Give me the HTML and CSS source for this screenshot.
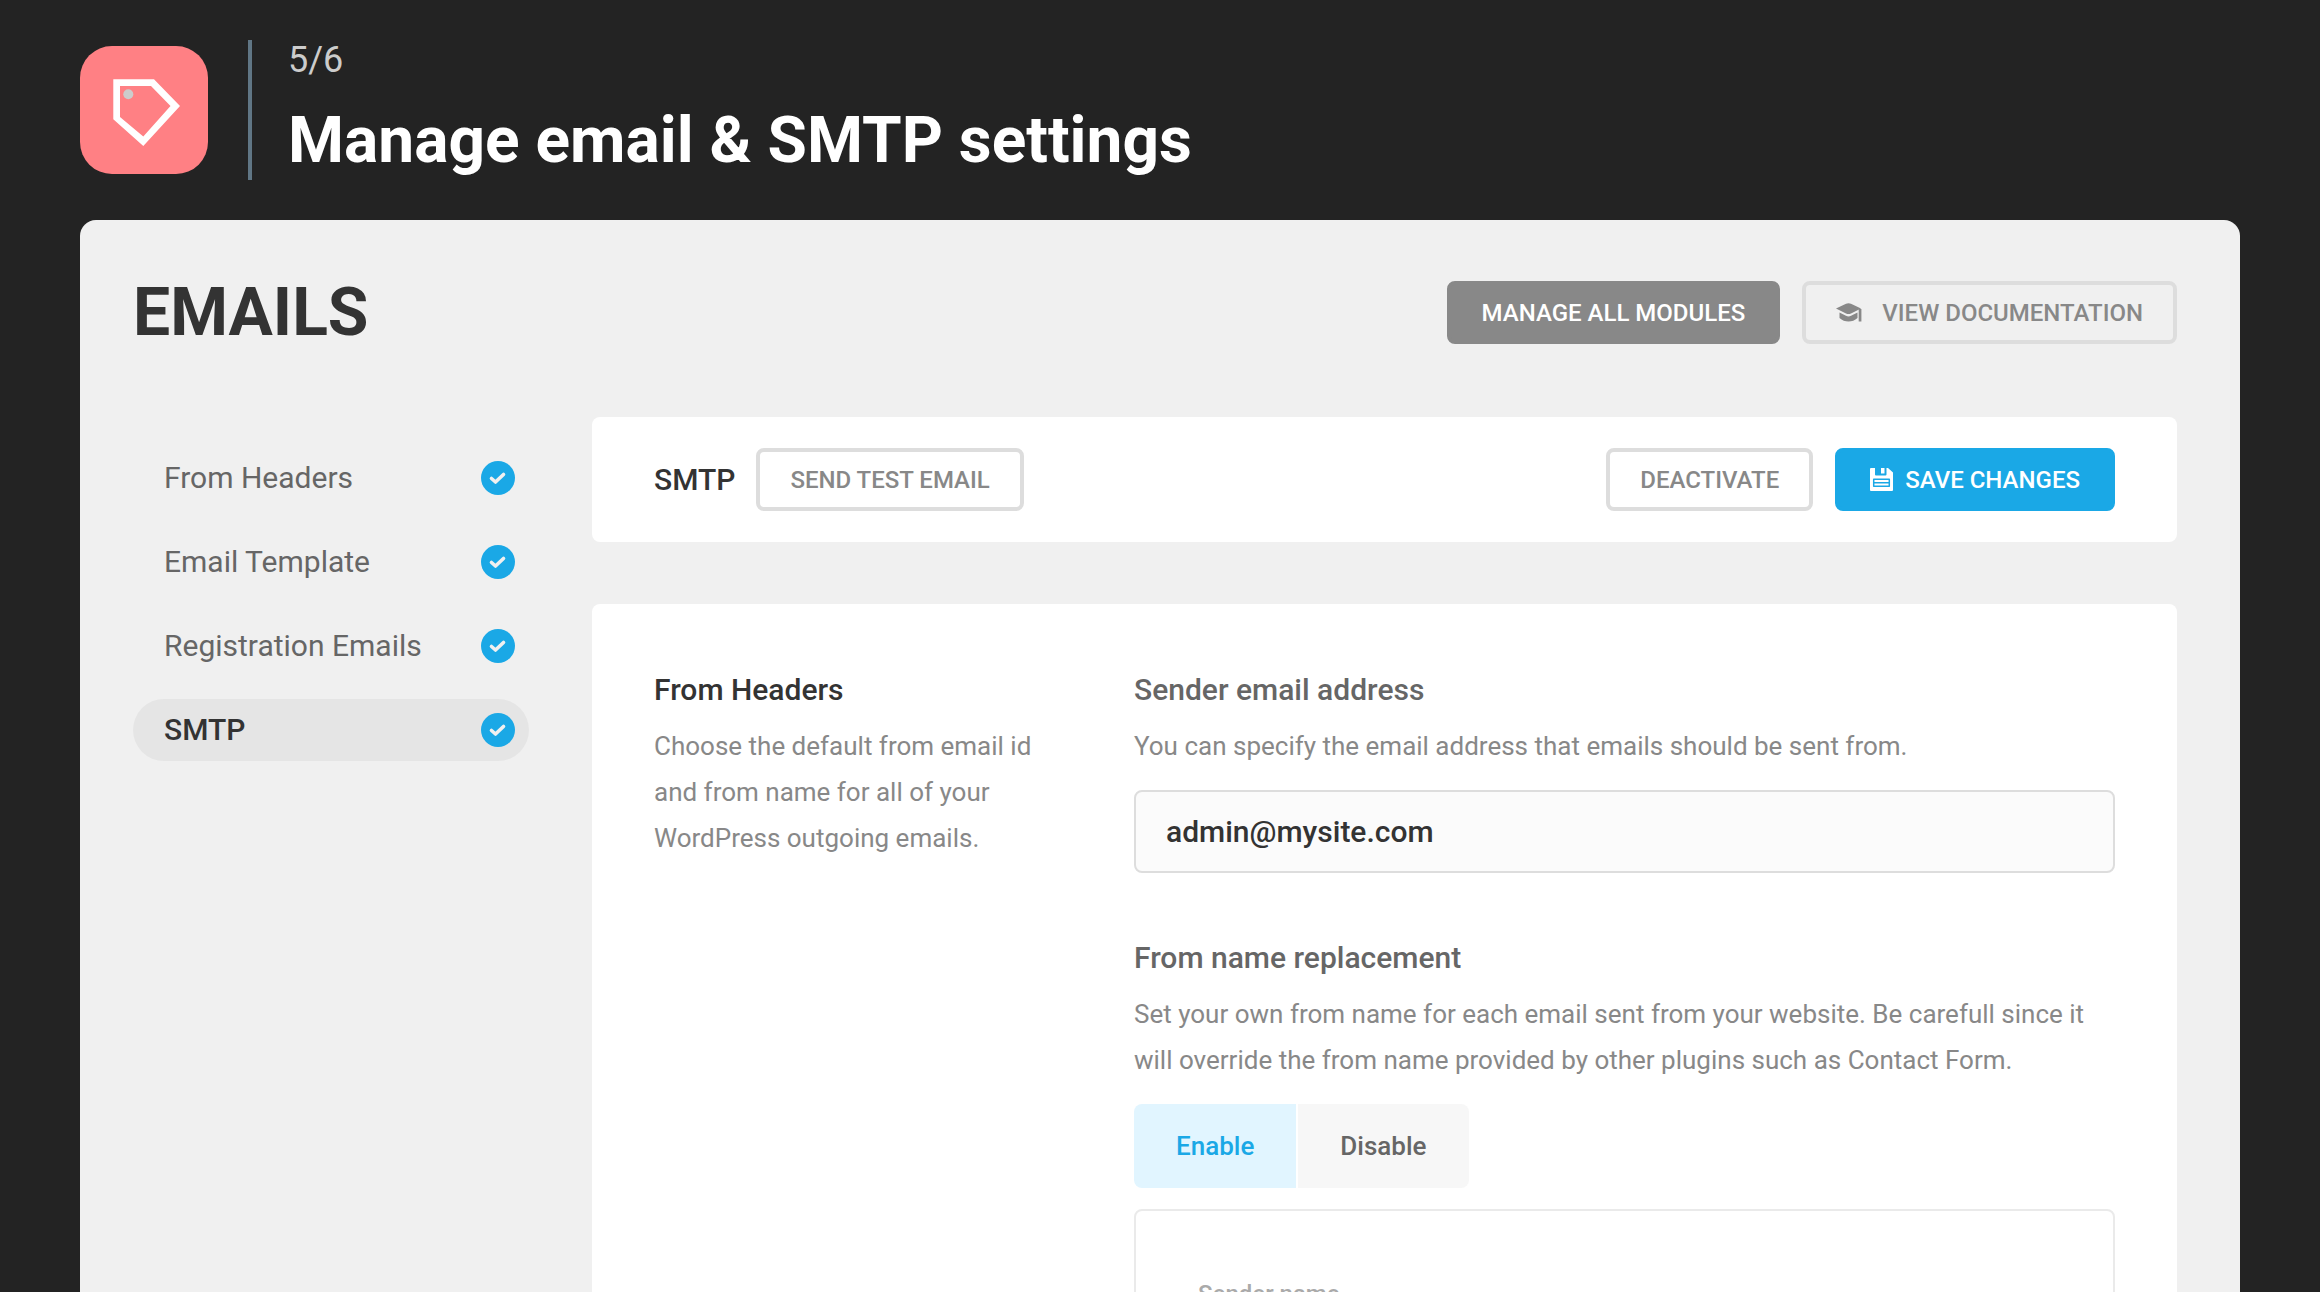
FILE: index.html
```html
<!DOCTYPE html>
<html lang="en">
<head>
    <meta charset="UTF-8">
    <meta name="viewport" content="width=device-width, initial-scale=1.0">
    <title>Manage email &amp; SMTP settings</title>
    <link rel="stylesheet" href="styles.css">
</head>
<body>
    <svg class="sprite" aria-hidden="true">
        <symbol id="icon-check" viewBox="0 0 34 34">
            <circle cx="17" cy="17" r="17" fill="#1aa8e6"/>
            <path d="M10.500 17.500l4 3.500L22.500 13.500" fill="none" stroke="currentColor" stroke-width="3.600" stroke-linecap="round" stroke-linejoin="round"/>
        </symbol>
    </svg>

    <header class="header">
        <div class="logo">
            <svg width="128" height="128" viewBox="0 0 128 128" aria-hidden="true">
                <path d="M33.300 33.300H74L100 60 63.300 100 33.300 73.300ZM40 40V71L63.300 90.500 90.500 60 71 40Z" fill="#fff" fill-rule="evenodd"/>
                <circle cx="48.300" cy="48.300" r="5" fill="#ccc"/>
            </svg>
        </div>
        <div class="header-text">
            <p class="step">5/6</p>
            <h1>Manage email &amp; SMTP settings</h1>
        </div>
    </header>

    <main class="panel">
        <div class="panel-top">
            <h2>EMAILS</h2>
            <div class="actions">
                <button class="btn btn-dark" type="button">MANAGE ALL MODULES</button>
                <button class="btn" type="button">
                    <svg class="icon-docs" width="26" height="19" viewBox="0 0 26 19" aria-hidden="true">
                        <path d="M0 5.500L10 .8Q12.500-.2 15 .8L25 5.500 15 10.400Q12.500 11.500 10 10.400Z" fill="currentColor"/>
                        <path d="M3.500 9.500L10 12.800Q12.500 14 15 12.800L21.500 9.500V15Q17.500 18.600 12.500 18.600T3.500 15Z" fill="currentColor"/>
                        <path d="M22.700 6H25.400V18.500H22.700Z" fill="currentColor"/>
                    </svg>
                    VIEW DOCUMENTATION
                </button>
            </div>
        </div>

        <div class="layout">
            <nav class="menu">
                <a href="#from-headers">From Headers <svg><use href="#icon-check"/></svg></a>
                <a href="#email-template">Email Template <svg><use href="#icon-check"/></svg></a>
                <a href="#registration-emails">Registration Emails <svg><use href="#icon-check"/></svg></a>
                <a href="#smtp" class="active">SMTP <svg><use href="#icon-check"/></svg></a>
            </nav>

            <div class="content">
                <div class="card toolbar">
                    <h3>SMTP</h3>
                    <button class="btn" type="button">SEND TEST EMAIL</button>
                    <div class="actions">
                        <button class="btn" type="button">DEACTIVATE</button>
                        <button class="btn btn-primary" type="button">
                            <svg width="23" height="23" viewBox="0 0 23 23" aria-hidden="true">
                                <path d="M1 0H5V6.500Q5 7.500 6 7.500H15.500Q16.500 7.500 16.500 6.500V0H18L23 4.500V22Q23 23 22 23H1Q0 23 0 22V1Q0 0 1 0Z" fill="currentColor"/>
                                <path d="M11 0H14.500V5.500H11Z" fill="currentColor"/>
                                <path d="M3.700 11.200H19.300V18.300H3.700ZM4 14.800H19" fill="none" stroke="#1aa8e6" stroke-width="1.500" stroke-linejoin="round"/>
                            </svg>
                            SAVE CHANGES
                        </button>
                    </div>
                </div>

                <form class="card settings">
                    <section class="intro">
                        <h3>From Headers</h3>
                        <p>Choose the default from email id and from name for all of your WordPress outgoing emails.</p>
                    </section>

                    <div class="fields">
                        <div class="field">
                            <label class="field-title" for="sender-email">Sender email address</label>
                            <p>You can specify the email address that emails should be sent from.</p>
                            <input class="text-input" type="email" id="sender-email" value="admin@mysite.com">
                        </div>

                        <fieldset class="field">
                            <legend class="field-title">From name replacement</legend>
                            <p>Set your own from name for each email sent from your website. Be carefull since it will override the from name provided by other plugins such as Contact Form.</p>
                            <div class="toggle">
                                <input type="radio" name="replace" id="replace-on" checked>
                                <label for="replace-on">Enable</label>
                                <input type="radio" name="replace" id="replace-off">
                                <label for="replace-off">Disable</label>
                            </div>
                            <div class="subfields">
                                <label for="sender-name">Sender name</label>
                                <input class="text-input" type="text" id="sender-name">
                            </div>
                        </fieldset>
                    </div>
                </form>
            </div>
        </div>
    </main>
</body>
</html>
```

FILE: styles.css
```css
* {
    margin: 0;
    padding: 0;
    box-sizing: border-box;
}

:root {
    --blue: #1aa8e6;
    --dark: #333;
    --text: #666;
    --muted: #888;
    --border: #ddd;
}

body {
    height: 100vh;
    display: flex;
    flex-direction: column;
    overflow: hidden;
    padding: 40px 80px 0;
    background: #232323;
    color: var(--text);
    font-family: Roboto, sans-serif;
    font-size: 26px;
    line-height: 46px;
}

button,
input {
    font: inherit;
}

.sprite {
    display: none;
}

/* Header */
.header {
    display: flex;
    align-items: center;
    gap: 40px;
    margin-bottom: 40px;
}

.logo {
    height: 128px;
    border-radius: 32px;
    background: #ff8084;
}

.header-text {
    height: 140px;
    padding-left: 36px;
    border-left: 4px solid #607685;
}

.step {
    color: #ccc;
    font-size: 36px;
    line-height: 40px;
}

h1 {
    margin-top: 21px;
    color: #fff;
    font-size: 64px;
    font-weight: 700;
    line-height: 80px;
}

/* Panel */
.panel {
    flex: 1;
    min-height: 0;
    overflow: hidden;
    padding: 61px 63px 0 53px;
    border-radius: 16px 16px 0 0;
    background: #f0f0f0;
}

.panel-top {
    display: flex;
    align-items: flex-start;
    justify-content: space-between;
    margin-bottom: 72px;
}

h2 {
    color: var(--dark);
    font-size: 66px;
    line-height: 64px;
}

.actions {
    display: flex;
    gap: 22px;
}

/* Buttons */
.btn {
    display: flex;
    align-items: center;
    gap: 12px;
    height: 63px;
    padding: 0 30px;
    border: 4px solid var(--border);
    border-radius: 8px;
    background: transparent;
    color: var(--muted);
    font-size: 24px;
    font-weight: 500;
    white-space: nowrap;
    cursor: pointer;
}

.btn-dark {
    padding: 0 31px;
    border-color: #888;
    background: #888;
    color: #fff;
}

.btn-primary {
    padding: 0 31px;
    border-color: var(--blue);
    background: var(--blue);
    color: #fff;
}

.icon-docs {
    margin-right: 8px;
}

/* Menu and cards */
.layout {
    display: grid;
    grid-template-columns: 396px 1fr;
    gap: 63px;
}

.menu {
    display: flex;
    flex-direction: column;
    gap: 22px;
    padding-top: 30px;
}

.menu a {
    display: flex;
    align-items: center;
    justify-content: space-between;
    height: 62px;
    padding: 0 14px 0 31px;
    border-radius: 31px;
    color: var(--text);
    font-size: 30px;
    text-decoration: none;
}

.menu a.active {
    background: #e5e5e5;
    color: var(--dark);
    font-weight: 500;
}

.menu svg {
    width: 34px;
    height: 34px;
    color: #f0f0f0;
}

.card {
    border-radius: 8px;
    background: #fff;
}

.toolbar {
    display: flex;
    align-items: center;
    gap: 21px;
    margin-bottom: 62px;
    padding: 31px 62px;
}

.toolbar .actions {
    margin-left: auto;
}

h3 {
    color: var(--dark);
    font-size: 30px;
    font-weight: 500;
}

/* Settings form */
.settings {
    display: grid;
    grid-template-columns: 400px 1fr;
    gap: 80px;
    padding: 63px 62px;
}

.settings p {
    color: var(--muted);
}

.settings h3,
.field-title {
    display: block;
    margin-bottom: 10px;
    font-size: 30px;
    font-weight: 500;
}

.field {
    margin-bottom: 62px;
    border: 0;
}

.text-input {
    display: block;
    width: 100%;
    height: 83px;
    margin-top: 21px;
    padding: 0 30px;
    border: 2px solid var(--border);
    border-radius: 8px;
    background: #fbfbfb;
    color: var(--dark);
    font-size: 30px;
    font-weight: 500;
}

.toggle {
    display: flex;
    gap: 2px;
    margin-top: 21px;
}

.toggle input {
    position: absolute;
    opacity: 0;
}

.toggle label {
    padding: 19px 42px;
    border-radius: 0 8px 8px 0;
    background: #f7f7f7;
    font-weight: 500;
    cursor: pointer;
}

.toggle label:first-of-type {
    border-radius: 8px 0 0 8px;
}

.toggle input:checked + label {
    background: #e1f5ff;
    color: var(--blue);
}

.subfields {
    margin-top: 21px;
    padding: 60px 62px;
    border: 2px solid #eaeaea;
    border-radius: 8px;
    color: #aaa;
    font-size: 24px;
    font-weight: 500;
}
```
